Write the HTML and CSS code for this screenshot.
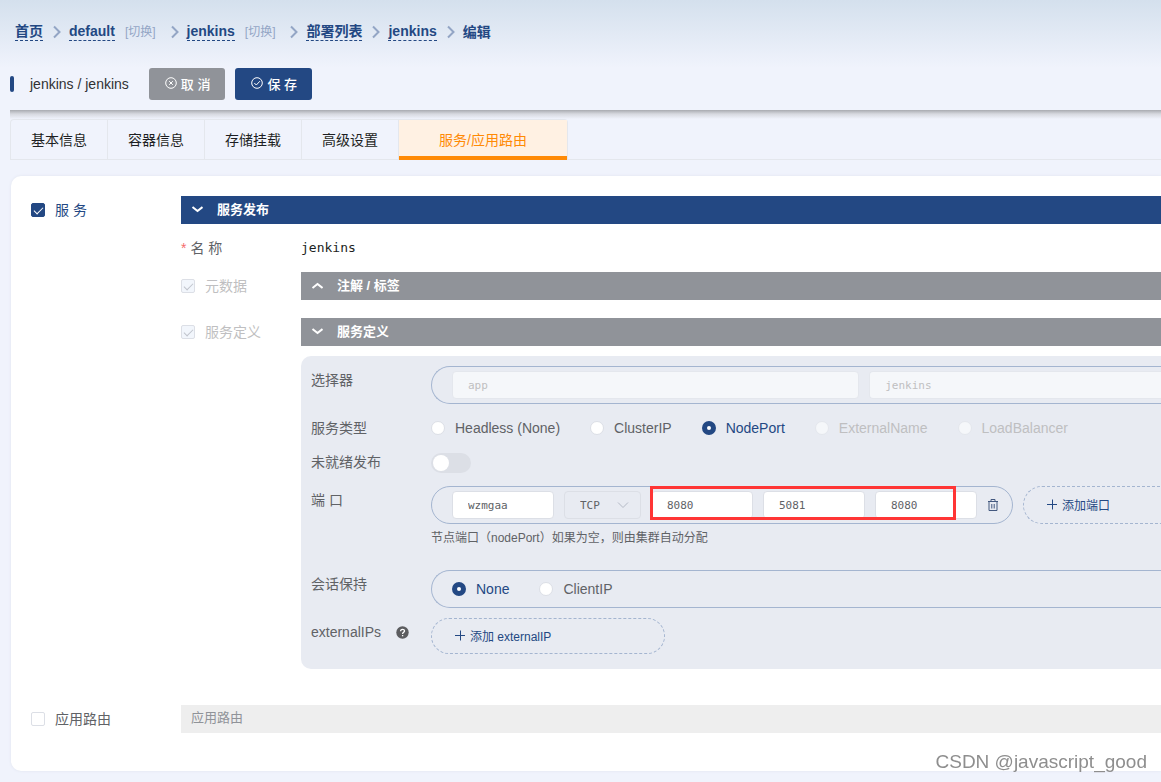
FILE: index.html
```html
<!DOCTYPE html>
<html lang="zh-CN">
<head>
<meta charset="utf-8">
<title>jenkins / jenkins</title>
<link rel="stylesheet" href="styles.css">
</head>
<body>
<svg class="defs" aria-hidden="true">
  <symbol id="sep" viewBox="0 0 8 14"><path d="M1 1.500L6.500 7L1 12.500" fill="none" stroke="currentColor" stroke-width="2"/></symbol>
  <symbol id="down" viewBox="0 0 12 12"><path d="M1.500 4L6.500 8L11.500 4" fill="none" stroke="currentColor" stroke-width="2"/></symbol>
  <symbol id="up" viewBox="0 0 12 12"><path d="M1.500 9L6.500 5L11.500 9" fill="none" stroke="currentColor" stroke-width="2"/></symbol>
  <symbol id="plus" viewBox="0 0 12 12"><path d="M1 6.500H11M6.500 1.500V11.500" fill="none" stroke="currentColor"/></symbol>
</svg>
<header class="head">
  <nav class="crumbs">
    <a class="crumb" href="#">首页</a>
    <svg class="sep"><use href="#sep"/></svg>
    <a class="crumb" href="#">default</a><a class="switch" href="#">[切换]</a>
    <svg class="sep"><use href="#sep"/></svg>
    <a class="crumb" href="#">jenkins</a><a class="switch" href="#">[切换]</a>
    <svg class="sep"><use href="#sep"/></svg>
    <a class="crumb" href="#">部署列表</a>
    <svg class="sep"><use href="#sep"/></svg>
    <a class="crumb" href="#">jenkins</a>
    <svg class="sep"><use href="#sep"/></svg>
    <span class="current">编辑</span>
  </nav>
  <div class="titlebar">
    <span class="marker"></span>
    <h1 class="title">jenkins / jenkins</h1>
    <button class="btn btn-cancel" type="button">
      <svg class="ico" viewBox="0 0 12 12" fill="none" stroke="currentColor"><circle cx="6" cy="6" r="5.300"/><path d="M4.200 4.200L7.800 7.800M7.800 4.200L4.200 7.800"/></svg>取 消</button>
    <button class="btn btn-save" type="button">
      <svg class="ico" viewBox="0 0 12 12" fill="none" stroke="currentColor"><circle cx="6" cy="6" r="5.300"/><path d="M3.300 6L5.300 8L8.900 4.200"/></svg>保 存</button>
  </div>
</header>
<div class="shade"></div>
<div class="tabbar">
  <div class="tabs" role="tablist">
    <button class="tab" role="tab" type="button">基本信息</button>
    <button class="tab" role="tab" type="button">容器信息</button>
    <button class="tab" role="tab" type="button">存储挂载</button>
    <button class="tab" role="tab" type="button">高级设置</button>
    <button class="tab tab-active" role="tab" type="button" aria-selected="true">服务/应用路由</button>
  </div>
</div>
<main class="panel">
  <section class="block">
    <label class="check check-on side"><input type="checkbox" checked>服 务</label>
    <div class="content">
      <button class="bar bar-blue" type="button"><svg class="ico"><use href="#down"/></svg>服务发布</button>
      <div class="row name-row">
        <span class="label"><span class="star">*</span>名 称</span>
        <span class="value">jenkins</span>
      </div>
      <div class="row meta-row">
        <label class="check check-off label"><input type="checkbox" checked disabled>元数据</label>
        <button class="bar" type="button"><svg class="ico"><use href="#up"/></svg>注解 / 标签</button>
      </div>
      <div class="row">
        <label class="check check-off label"><input type="checkbox" checked disabled>服务定义</label>
        <div class="content">
          <button class="bar" type="button"><svg class="ico"><use href="#down"/></svg>服务定义</button>
          <div class="define">
            <div class="row field">
              <span class="label">选择器</span>
              <div class="capsule capsule-open">
                <input class="text text-key" type="text" value="app" aria-label="选择器键" disabled>
                <input class="text text-val" type="text" value="jenkins" aria-label="选择器值" disabled>
              </div>
            </div>
            <div class="row field tight">
              <span class="label">服务类型</span>
              <div class="radios">
                <label class="radio"><input type="radio" name="type">Headless (None)</label>
                <label class="radio"><input type="radio" name="type">ClusterIP</label>
                <label class="radio"><input type="radio" name="type" checked>NodePort</label>
                <label class="radio"><input type="radio" name="type" disabled>ExternalName</label>
                <label class="radio"><input type="radio" name="type" disabled>LoadBalancer</label>
              </div>
            </div>
            <div class="row field">
              <label class="label" for="notready">未就绪发布</label>
              <div class="toggle-wrap"><input class="toggle" id="notready" type="checkbox" role="switch"></div>
            </div>
            <div class="row">
              <span class="label">端 口</span>
              <div class="ports">
                <div class="capsule">
                  <input class="text port" type="text" value="wzmgaa" aria-label="端口名称">
                  <span class="pick">
                    <select class="text select" aria-label="协议"><option>TCP</option></select>
                    <svg class="caret" viewBox="0 0 12 12"><path d="M1 3.500L6 8.500L11 3.500" fill="none" stroke="currentColor"/></svg>
                  </span>
                  <input class="text port" type="text" value="8080" aria-label="服务端口">
                  <input class="text port" type="text" value="5081" aria-label="节点端口">
                  <input class="text port" type="text" value="8080" aria-label="容器端口">
                  <button class="trash" type="button" aria-label="删除"><svg class="ico" viewBox="0 0 12 12" fill="none" stroke="currentColor"><path d="M1 2.500H11M4 2.500V0.500H8V2.500M2 2.500V11.500H10V2.500M4.800 5V9.500M7.200 5V9.500"/></svg></button>
                  <span class="highlight"></span>
                </div>
                <button class="add add-port" type="button"><svg class="ico"><use href="#plus"/></svg>添加端口</button>
              </div>
            </div>
            <p class="hint">节点端口（nodePort）如果为空，则由集群自动分配</p>
            <div class="row field">
              <span class="label">会话保持</span>
              <div class="capsule capsule-open">
                <div class="radios">
                  <label class="radio"><input type="radio" name="session" checked>None</label>
                  <label class="radio"><input type="radio" name="session">ClientIP</label>
                </div>
              </div>
            </div>
            <div class="row">
              <span class="label label-help">externalIPs
                <svg class="help" viewBox="0 0 13 13"><circle cx="6.500" cy="6.500" r="6.200" fill="#5c5d60"/><path d="M4.600 5.200C4.600 2.700 8.500 2.700 8.500 5C8.500 6.300 6.600 6.300 6.600 7.900M6.600 8.900V10.200" fill="none" stroke="#fff" stroke-width="1.300"/></svg>
              </span>
              <button class="add add-ip" type="button"><svg class="ico"><use href="#plus"/></svg>添加 externalIP</button>
            </div>
          </div>
        </div>
      </div>
    </div>
  </section>
  <section class="block">
    <label class="check side"><input type="checkbox">应用路由</label>
    <div class="content"><div class="bar bar-empty">应用路由</div></div>
  </section>
</main>
<div class="watermark">CSDN @javascript_good</div>
</body>
</html>
```

FILE: styles.css
```css
* { box-sizing: border-box; }
body {
  margin: 0;
  padding-bottom: 11px;
  background: #f0f3fc linear-gradient(#d4e0ed, #f0f3fc) no-repeat 0 0 / 100% 68px;
  font: 14px/20px "Liberation Sans", "Noto Sans CJK SC", sans-serif;
  color: #606266;
}
button, input, select { font-family: inherit; margin: 0; }
button { cursor: pointer; }
a { text-decoration: none; }
.defs { display: none; }
.ico { width: 12px; height: 12px; flex: none; }

.head { padding: 22px 0 10px 10px; }
.crumbs { display: flex; align-items: center; padding-left: 5px; height: 20px; font-weight: bold; color: #234883; }
.crumb { color: #234883; line-height: 17px; border-bottom: 1px dashed #234883; }
.switch { margin: 0 5px 0 10px; font-size: 12px; font-weight: normal; color: #93a5c5; }
.sep { width: 8px; height: 14px; margin: 0 8px 0 10px; color: #93a5c5; }
.titlebar { display: flex; align-items: center; margin-top: 26px; }
.marker { width: 4px; height: 16px; border-radius: 2px; background: #234883; }
.title { margin: 0 20px 0 16px; font-size: 14px; font-weight: normal; color: #303133; }
.btn {
  display: flex; align-items: center; gap: 4px; height: 32px; padding: 0 15px 2px 16px; margin-right: 10px;
  border: 0; border-radius: 3px; color: #fff; font-size: 13px; font-weight: 500;
}
.btn-cancel { background: #909399; }
.btn-save { background: #234883; }
.shade { height: 9px; margin-left: 10px; background: linear-gradient(#a9abb0, #d7d9e0 45%, #f0f3fc); }

.tabbar { margin-left: 10px; border-bottom: 1px solid #e4e7ed; }
.tabs { display: inline-flex; vertical-align: top; margin-bottom: -1px; border: 1px solid #e4e7ed; border-bottom: 0; border-radius: 4px 4px 0 0; }
.tab { height: 40px; padding: 0 20px 2px; border: 0; border-right: 1px solid #e4e7ed; border-bottom: 1px solid #e4e7ed; background: none; font-size: 14px; color: #1d1f23; }
.tab-active { padding: 2px 40px 0; border-right: 0; border-bottom: 4px solid #ff8a05; background: #fff1e3; color: #ff8a05; }

.panel {
  display: flex; flex-direction: column; gap: 36px;
  margin: 16px 0 0 11px; padding: 20px 0 38px 20px;
  background: #fff; border-radius: 10px 0 0 10px; box-shadow: 0 0 3px #dfe3ee;
}
.block, .row { display: flex; align-items: flex-start; }
.content { flex: 1; min-width: 0; }
.side { width: 150px; flex: none; }
.label { width: 120px; flex: none; line-height: 28px; }
.check { display: flex; align-items: center; gap: 10px; height: 28px; }
.check-on { color: #234883; }
.check-off { color: #bfbfc1; }
.check input {
  appearance: none; display: grid; place-items: center; width: 14px; height: 14px;
  border: 1px solid #dcdfe6; border-radius: 2px; background: #fff;
}
.check input:checked { background: #234883; border-color: #234883; }
.check input:disabled { background: #f2f6fc; border-color: #dcdfe6; }
.check input:checked::after {
  content: ""; width: 8px; height: 4px; margin-bottom: 2px;
  border: solid #fff; border-width: 0 0 1px 1px; transform: rotate(-45deg);
}
.check input:disabled::after { border-color: #c0c4cc; }
.bar {
  display: flex; align-items: center; gap: 14px; width: 100%; height: 28px; padding: 0 10px 3px;
  border: 0; background: #909399; color: #fff; font-size: 13px; font-weight: bold; text-align: left;
}
.bar-blue { background: #234883; }
.bar-empty { background: #eee; color: #909399; font-weight: normal; }
.name-row { margin: 10px 0; }
.star { margin-right: 4px; color: #f56c6c; }
.value { font: 13px/28px "DejaVu Sans Mono", monospace; color: #1d1f23; }
.meta-row { margin-bottom: 18px; }

.define { margin-top: 10px; padding: 10px 0 15px 10px; border-radius: 10px 0 0 10px; background: #e8ebf2; }
.field { margin-bottom: 10px; }
.tight { margin-bottom: 6px; }
.capsule {
  position: relative; display: flex; align-items: center; gap: 10px; height: 38px; padding: 0 13px 0 20px;
  border: 1px solid #a4b5d0; border-radius: 19px;
}
.capsule-open { flex: 1; min-width: 0; padding-right: 0; border-right: 0; border-radius: 19px 0 0 19px; }
.text {
  height: 28px; padding: 0 15px; border: 1px solid #dcdfe6; border-radius: 4px; background: #fff;
  font: 11px "DejaVu Sans Mono", monospace; color: #606266;
}
.text:disabled { background: #f5f7fa; border-color: #e4e7ed; color: #bfbfc1; }
.text-key { flex: 59 1 0; min-width: 0; }
.text-val { flex: 41 1 0; min-width: 0; border-right: 0; border-radius: 4px 0 0 4px; }
.port { width: 102px; }
.pick { position: relative; display: flex; }
.select { appearance: none; width: 77px; background: transparent; }
.caret { position: absolute; right: 12px; top: 8px; width: 12px; height: 12px; color: #b4bac6; pointer-events: none; }
.trash { display: flex; padding: 0; border: 0; background: none; color: #43587f; }
.highlight { position: absolute; left: 218px; top: -1px; width: 306px; height: 34px; border: 3px solid #ff3535; pointer-events: none; }
.ports { display: flex; gap: 10px; flex: 1; min-width: 0; }
.add {
  display: flex; align-items: center; gap: 4px; padding: 0 22px 2px; border: 1px dashed #a4b5d0;
  border-radius: 19px; background: none; color: #234883; font-size: 12px;
}
.add-port { flex: 1; height: 38px; border-right: 0; border-radius: 19px 0 0 19px; white-space: nowrap; }
.add-ip { width: 234px; height: 36px; }
.hint { margin: 0 0 18px 120px; font-size: 12px; line-height: 28px; }
.radios { display: flex; gap: 30px; }
.radio { display: flex; align-items: center; gap: 10px; height: 28px; }
.radio:has(:checked) { color: #234883; }
.radio:has(:disabled) { color: #bfbfc1; }
.radio input { appearance: none; width: 14px; height: 14px; border: 1px solid #dcdfe6; border-radius: 50%; background: #fff; }
.radio input:checked { border: 5px solid #234883; }
.radio input:disabled { background: #f5f7fa; border-color: #e4e7ed; }
.toggle-wrap { display: flex; align-items: center; height: 30px; margin-bottom: -2px; }
.toggle { appearance: none; display: flex; width: 40px; height: 20px; padding: 2px; border-radius: 10px; background: #dcdfe6; }
.toggle::before { content: ""; width: 16px; height: 16px; border-radius: 50%; background: #fff; }
.label-help { display: flex; align-items: center; gap: 15px; }
.help { width: 13px; height: 13px; }
.watermark {
  position: fixed; right: 14px; bottom: 8px; font-size: 19px; line-height: 24px;
  color: #8e8e8e; text-shadow: -1px -1px 0 #fff; pointer-events: none;
}
```
